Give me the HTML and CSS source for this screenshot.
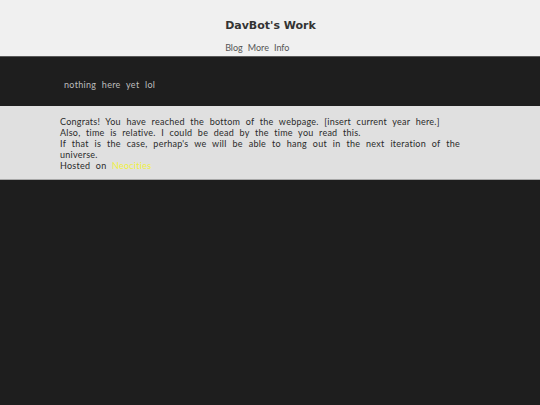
FILE: index.html
```html
<!DOCTYPE html>
<html>
<head>
<meta charset="utf-8">
<link rel="stylesheet" href="styles.css">
</head>
<body>
<header class="top">
  <div class="brand">
    <h1 class="title">DavBot's Work</h1>
    <nav class="nav"><a href="#">Blog</a><a href="#">More</a><a href="#">Info</a></nav>
  </div>
</header>
<main class="main">
  <p class="note">nothing here yet lol</p>
</main>
<footer class="foot">
  <p class="line">Congrats! You have reached the bottom of the webpage. [insert current year here.]</p>
  <p class="line">Also, time is relative. I could be dead by the time you read this.</p>
  <p class="line">If that is the case, perhap's we will be able to hang out in the next iteration of the universe.</p>
  <p class="line">Hosted on <a class="host" href="#">Neocities</a></p>
</footer>
</body>
</html>
```
FILE: styles.css
```css
html, body { margin: 0; padding: 0; }
body {
  background: #1e1e1e;
  font-family: "Lato", "DejaVu Sans", sans-serif;
}
.top {
  background: #f0f0f0;
  height: 56px;
  border-bottom: 1px solid #5a5a5a;
  display: flex;
  justify-content: center;
}
.brand {
  display: flex;
  flex-direction: column;
  align-items: flex-start;
  padding-left: 1px;
}
.title {
  margin: 19px 0 0;
  font-family: "DejaVu Sans", sans-serif;
  font-weight: bold;
  font-size: 11px;
  color: #333;
  line-height: 14px;
}
.nav {
  margin-top: 9px;
  display: flex;
  gap: 5px;
  font-size: 9px;
  line-height: 11px;
}
.nav a { color: #555; text-decoration: none; }
.main {
  height: 49px;
  padding: 0 64px;
  box-sizing: border-box;
  padding-top: 22px;
}
.note {
  margin: 0;
  color: #bdbdbd;
  font-size: 9px;
  line-height: 11px;
  word-spacing: 3px;
  letter-spacing: 0.3px;
}
.foot {
  background: #e0e0e0;
  border-bottom: 1px solid #a8a8a8;
  padding: 10px 80px 8px 60px;
  color: #2a2a2a;
  font-size: 9px;
  line-height: 11px;
}
.line {
  margin: 0;
  text-align: justify;
  text-align-last: left;
  word-spacing: 3px;
  letter-spacing: 0.25px;
}
.host { color: #f0f040; text-decoration: none; }
```
